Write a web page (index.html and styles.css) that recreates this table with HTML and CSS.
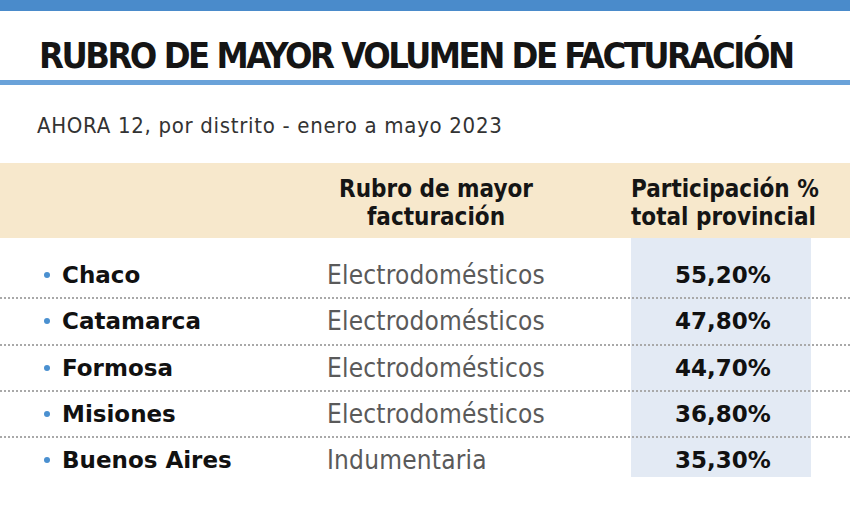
FILE: index.html
```html
<!DOCTYPE html>
<html lang="es">
<head>
<meta charset="utf-8">
<title>Rubro de mayor volumen de facturación</title>
<link rel="stylesheet" href="styles.css">
</head>
<body>
<div class="topbar"></div>
<header class="heading">
  <h1 class="title">RUBRO DE MAYOR VOLUMEN DE FACTURACIÓN</h1>
</header>
<p class="subtitle">AHORA 12, por distrito - enero a mayo 2023</p>
<section class="table">
  <div class="thead">
    <div class="th th-empty"></div>
    <div class="th th-rubro">Rubro de mayor<br>facturación</div>
    <div class="th th-pct">Participación %<br>total provincial</div>
    <div class="th"></div>
  </div>
  <div class="tbody">
    <div class="row"><div class="name"><span class="dot"></span>Chaco</div><div class="rubro">Electrodomésticos</div><div class="pct">55,20%</div><div></div></div>
    <div class="row"><div class="name"><span class="dot"></span>Catamarca</div><div class="rubro">Electrodomésticos</div><div class="pct">47,80%</div><div></div></div>
    <div class="row"><div class="name"><span class="dot"></span>Formosa</div><div class="rubro">Electrodomésticos</div><div class="pct">44,70%</div><div></div></div>
    <div class="row"><div class="name"><span class="dot"></span>Misiones</div><div class="rubro">Electrodomésticos</div><div class="pct">36,80%</div><div></div></div>
    <div class="row last"><div class="name"><span class="dot"></span>Buenos Aires</div><div class="rubro">Indumentaria</div><div class="pct">35,30%</div><div></div></div>
  </div>
</section>
</body>
</html>
```
FILE: styles.css
```css
html, body {
  margin: 0;
  padding: 0;
  background: #ffffff;
  width: 850px;
  height: 524px;
  overflow: hidden;
}
body {
  font-family: "DejaVu Sans", sans-serif;
  color: #111;
}
.topbar {
  height: 11px;
  background: #4a8bcb;
}
.heading {
  box-sizing: border-box;
  height: 74px;
  border-bottom: 5px solid #6aa2d9;
  padding: 25px 0 0 39px;
}
.title {
  margin: 0;
  font-family: "DejaVu Sans Condensed", "DejaVu Sans", sans-serif;
  font-stretch: condensed;
  font-weight: bold;
  font-size: 36px;
  line-height: 40px;
  letter-spacing: -2.5px;
  color: #151515;
}
.subtitle {
  margin: 0;
  padding: 29px 0 0 37px;
  height: 49px;
  font-family: "DejaVu Sans Condensed", "DejaVu Sans", sans-serif;
  font-stretch: condensed;
  font-size: 22px;
  line-height: 24px;
  color: #333;
  letter-spacing: 0.7px;
}
.thead, .row {
  display: grid;
  grid-template-columns: 327px 304px 180px 1fr;
}
.thead {
  background: #f7e8cc;
  height: 75px;
  box-sizing: border-box;
  padding-top: 12px;
}
.th {
  font-family: "DejaVu Sans Condensed", "DejaVu Sans", sans-serif;
  font-stretch: condensed;
  font-weight: bold;
  font-size: 24px;
  line-height: 28px;
  letter-spacing: 0;
  color: #151515;
}
.th-rubro {
  width: 218px;
  text-align: center;
  white-space: nowrap;
}
.th-pct {
  text-align: center;
  white-space: nowrap;
}
.tbody {
  padding-top: 15px;
  background: linear-gradient(#e3eaf4, #e3eaf4) no-repeat 631px 0 / 180px 239px;
}
.row {
  height: 46.33px;
  box-sizing: border-box;
  border-bottom: 2px dotted #a9a9a9;
  align-items: center;
}
.row.last {
  border-bottom: none;
  height: 44.33px;
}
.name {
  display: flex;
  align-items: center;
  padding-left: 44px;
  font-weight: bold;
  font-size: 23px;
  color: #111;
}
.dot {
  width: 6px;
  height: 6px;
  border-radius: 50%;
  background: #4a90d0;
  margin-right: 12px;
}
.rubro {
  font-family: "DejaVu Sans Condensed", "DejaVu Sans", sans-serif;
  font-stretch: condensed;
  font-size: 26px;
  color: #5a5a5a;
  letter-spacing: 0.2px;
}
.pct {
  text-align: center;
  font-weight: bold;
  font-size: 23px;
  color: #111;
  padding-left: 4px;
}
```
